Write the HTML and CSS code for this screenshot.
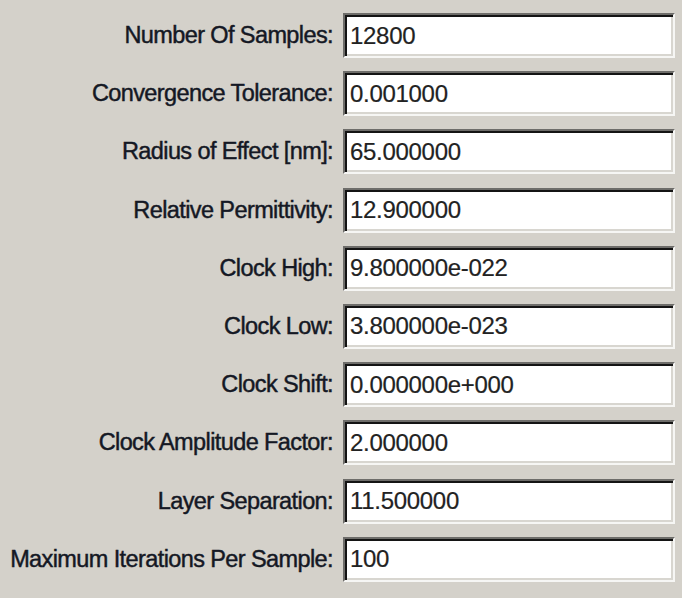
FILE: index.html
```html
<!DOCTYPE html>
<html lang="en">
<head>
    <meta charset="UTF-8">
    <title>Simulation Parameters</title>
    <link rel="stylesheet" href="styles.css">
</head>
<body>
    <div class="panel">
        <form class="params">
            <label for="samples">Number Of Samples:</label>
            <input type="text" id="samples" value="12800">

            <label for="tolerance">Convergence Tolerance:</label>
            <input type="text" id="tolerance" value="0.001000">

            <label for="radius">Radius of Effect [nm]:</label>
            <input type="text" id="radius" value="65.000000">

            <label for="permittivity">Relative Permittivity:</label>
            <input type="text" id="permittivity" value="12.900000">

            <label for="clockHigh">Clock High:</label>
            <input type="text" id="clockHigh" value="9.800000e-022">

            <label for="clockLow">Clock Low:</label>
            <input type="text" id="clockLow" value="3.800000e-023">

            <label for="clockShift">Clock Shift:</label>
            <input type="text" id="clockShift" value="0.000000e+000">

            <label for="amplitude">Clock Amplitude Factor:</label>
            <input type="text" id="amplitude" value="2.000000">

            <label for="separation">Layer Separation:</label>
            <input type="text" id="separation" value="11.500000">

            <label for="iterations">Maximum Iterations Per Sample:</label>
            <input type="text" id="iterations" value="100">
        </form>
    </div>
</body>
</html>
```

FILE: styles.css
```css
body {
    margin: 0;
    padding: 0;
    background: #ffffff;
    font-family: "Liberation Sans", Arial, sans-serif;
}
.panel {
    width: 682px;
    height: 598px;
    box-sizing: border-box;
    background: #d4d1ca;
    padding: 13px 7px 0 0;
}
.params {
    display: grid;
    grid-template-columns: 333px 1fr;
    grid-auto-rows: 45px;
    column-gap: 10px;
    row-gap: 13.2px;
    align-items: center;
}
.params label {
    text-align: right;
    font-size: 23.5px;
    color: #141824;
    letter-spacing: -0.6px;
    -webkit-text-stroke: 0.45px #141824;
}
.params input {
    height: 45px;
    width: 100%;
    box-sizing: border-box;
    margin: 0;
    padding: 0 0 0 5px;
    border: 2px solid;
    border-color: #6e6d6a #f6f6f4 #f6f6f4 #6e6d6a;
    box-shadow: inset 2px 2px 0 #141414, inset -2px -2px 0 #d8d6d0;
    background: #ffffff;
    font-family: "Liberation Sans", Arial, sans-serif;
    font-size: 24px;
    letter-spacing: -0.3px;
    color: #222222;
    -webkit-text-stroke: 0.2px #222222;
    outline: none;
}
```
